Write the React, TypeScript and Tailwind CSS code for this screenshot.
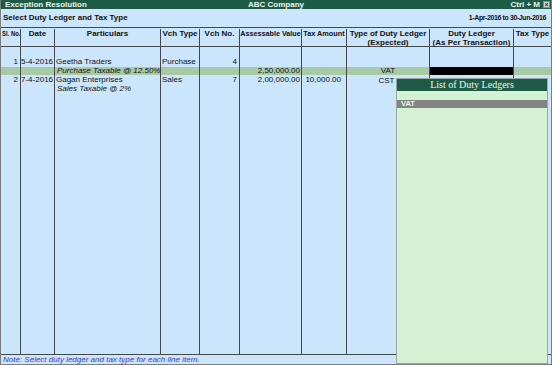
import React from 'react';

type Cell = { text?: React.ReactNode; cls?: string };

const widths = [
  'w-[20px]',
  'w-[34px]',
  'w-[106px]',
  'w-[39px]',
  'w-[40px]',
  'w-[62px]',
  'w-[45px]',
  'w-[83px]',
  'w-[84px]',
  'flex-1',
];

function Row({ cells = [], className = '' }: { cells?: Cell[]; className?: string }) {
  return (
    <div className={`flex ${className}`}>
      {widths.map((w, i) => (
        <div
          key={i}
          className={`${w} shrink-0 whitespace-nowrap ${i < 9 ? 'border-r border-[#474747]' : ''} ${cells[i]?.cls ?? ''}`}
        >
          {cells[i]?.text}
        </div>
      ))}
    </div>
  );
}

const R = 'text-right pr-[2px]';

export default function App() {
  const header: Cell[] = [
    { text: <span className="inline-block origin-left scale-x-[0.74]">Sl. No.</span>, cls: 'pl-[1px] overflow-hidden' },
    { text: 'Date', cls: 'text-center' },
    { text: 'Particulars', cls: 'text-center' },
    { text: 'Vch Type', cls: 'text-center' },
    { text: 'Vch No.', cls: 'text-center' },
    { text: 'Assessable Value', cls: 'text-center text-[7.2px]' },
    { text: 'Tax Amount', cls: 'text-center text-[7.3px]' },
    { text: <>Type of Duty Ledger<br />(Expected)</>, cls: 'text-center' },
    { text: <>Duty Ledger<br />(As Per Transaction)</>, cls: 'text-center' },
    { text: 'Tax Type', cls: 'text-center' },
  ];

  return (
    <div className="w-[552px] h-[365px] relative flex flex-col overflow-hidden bg-[#cbe5fd] border-x border-b border-[#7d7d7d] font-['Liberation_Sans',Arial,sans-serif] text-[8px] text-[#111]">
      {/* title bar */}
      <div className="h-[9px] shrink-0 flex items-center bg-[#1d5b46] text-[#eef3ee] font-bold leading-[9px] px-[4px]">
        <span className="flex-1">Exception Resolution</span>
        <span className="flex-1 text-center">ABC Company</span>
        <span className="flex-1 flex justify-end items-center gap-[3px]">
          Ctrl + M
          <span className="w-[7px] h-[7px] bg-[#d9d9d9] border border-[#8a8a8a] text-[#333] text-[7px] leading-[5px] flex items-center justify-center -mr-[3px]">
            ×
          </span>
        </span>
      </div>

      {/* sub header */}
      <div className="h-[18px] shrink-0 flex items-center justify-between pl-[2px] pr-[5px] font-bold">
        <span>Select Duty Ledger and Tax Type</span>
        <span className="text-[7px] tracking-[-0.4px]">1-Apr-2016 to 30-Jun-2016</span>
      </div>

      {/* table */}
      <Row cells={header} className="h-[20px] shrink-0 border-y border-[#474747] font-bold leading-[9px] pt-[1px]" />
      <div className="flex-1 flex flex-col">
        <Row className="h-[10px]" />
        <Row
          className="h-[10px] leading-[10px]"
          cells={[
            { text: '1', cls: R },
            { text: '5-4-2016', cls: R },
            { text: 'Geetha Traders', cls: 'pl-[1px]' },
            { text: 'Purchase', cls: 'pl-[1px]' },
            { text: '4', cls: R },
          ]}
        />
        <Row
          className="h-[8px] leading-[8px] bg-[#a8c9a5]"
          cells={[
            {},
            {},
            { text: 'Purchase Taxable @ 12.50%', cls: 'pl-[2px] italic' },
            {},
            {},
            { text: '2,50,000.00', cls: 'text-right pr-[1px]' },
            {},
            { text: 'VAT', cls: 'text-center' },
            { cls: 'bg-black' },
          ]}
        />
        <Row
          className="h-[9px] leading-[9px]"
          cells={[
            { text: '2', cls: R },
            { text: '7-4-2016', cls: R },
            { text: 'Gagan Enterprises', cls: 'pl-[1px]' },
            { text: 'Sales', cls: 'pl-[1px]' },
            { text: '7', cls: R },
            { text: '2,00,000.00', cls: 'text-right pr-[1px]' },
            { text: '10,000.00', cls: 'text-right pr-[5px]' },
            { text: 'CST', cls: 'text-center leading-[12px] pr-[3px]' },
          ]}
        />
        <Row
          className="h-[9px] leading-[9px]"
          cells={[{}, {}, { text: 'Sales Taxable @ 2%', cls: 'pl-[2px] italic' }]}
        />
        <Row className="flex-1" />
      </div>

      {/* note */}
      <div className="h-[10px] shrink-0 border-t border-[#474747] pl-[2px] italic text-[#3c3cd8] leading-[9px]">
        Note: Select duty ledger and tax type for each line item.
      </div>

      {/* popup */}
      <div className="absolute left-[395px] top-[78px] w-[152px] h-[286px] flex flex-col bg-[#d4f1d4] border border-[#9aa69a]">
        <div className="h-[12px] shrink-0 bg-[#1d5b46] text-[#eef3ee] text-center font-['Liberation_Serif',serif] text-[10px] leading-[12px]">
          List of Duty Ledgers
        </div>
        <div className="h-[9px] shrink-0" />
        <div className="h-[8px] shrink-0 bg-[#838383] text-[#f2f2f2] font-bold text-[7.5px] leading-[8px] pl-[4px]">
          VAT
        </div>
      </div>
    </div>
  );
}
